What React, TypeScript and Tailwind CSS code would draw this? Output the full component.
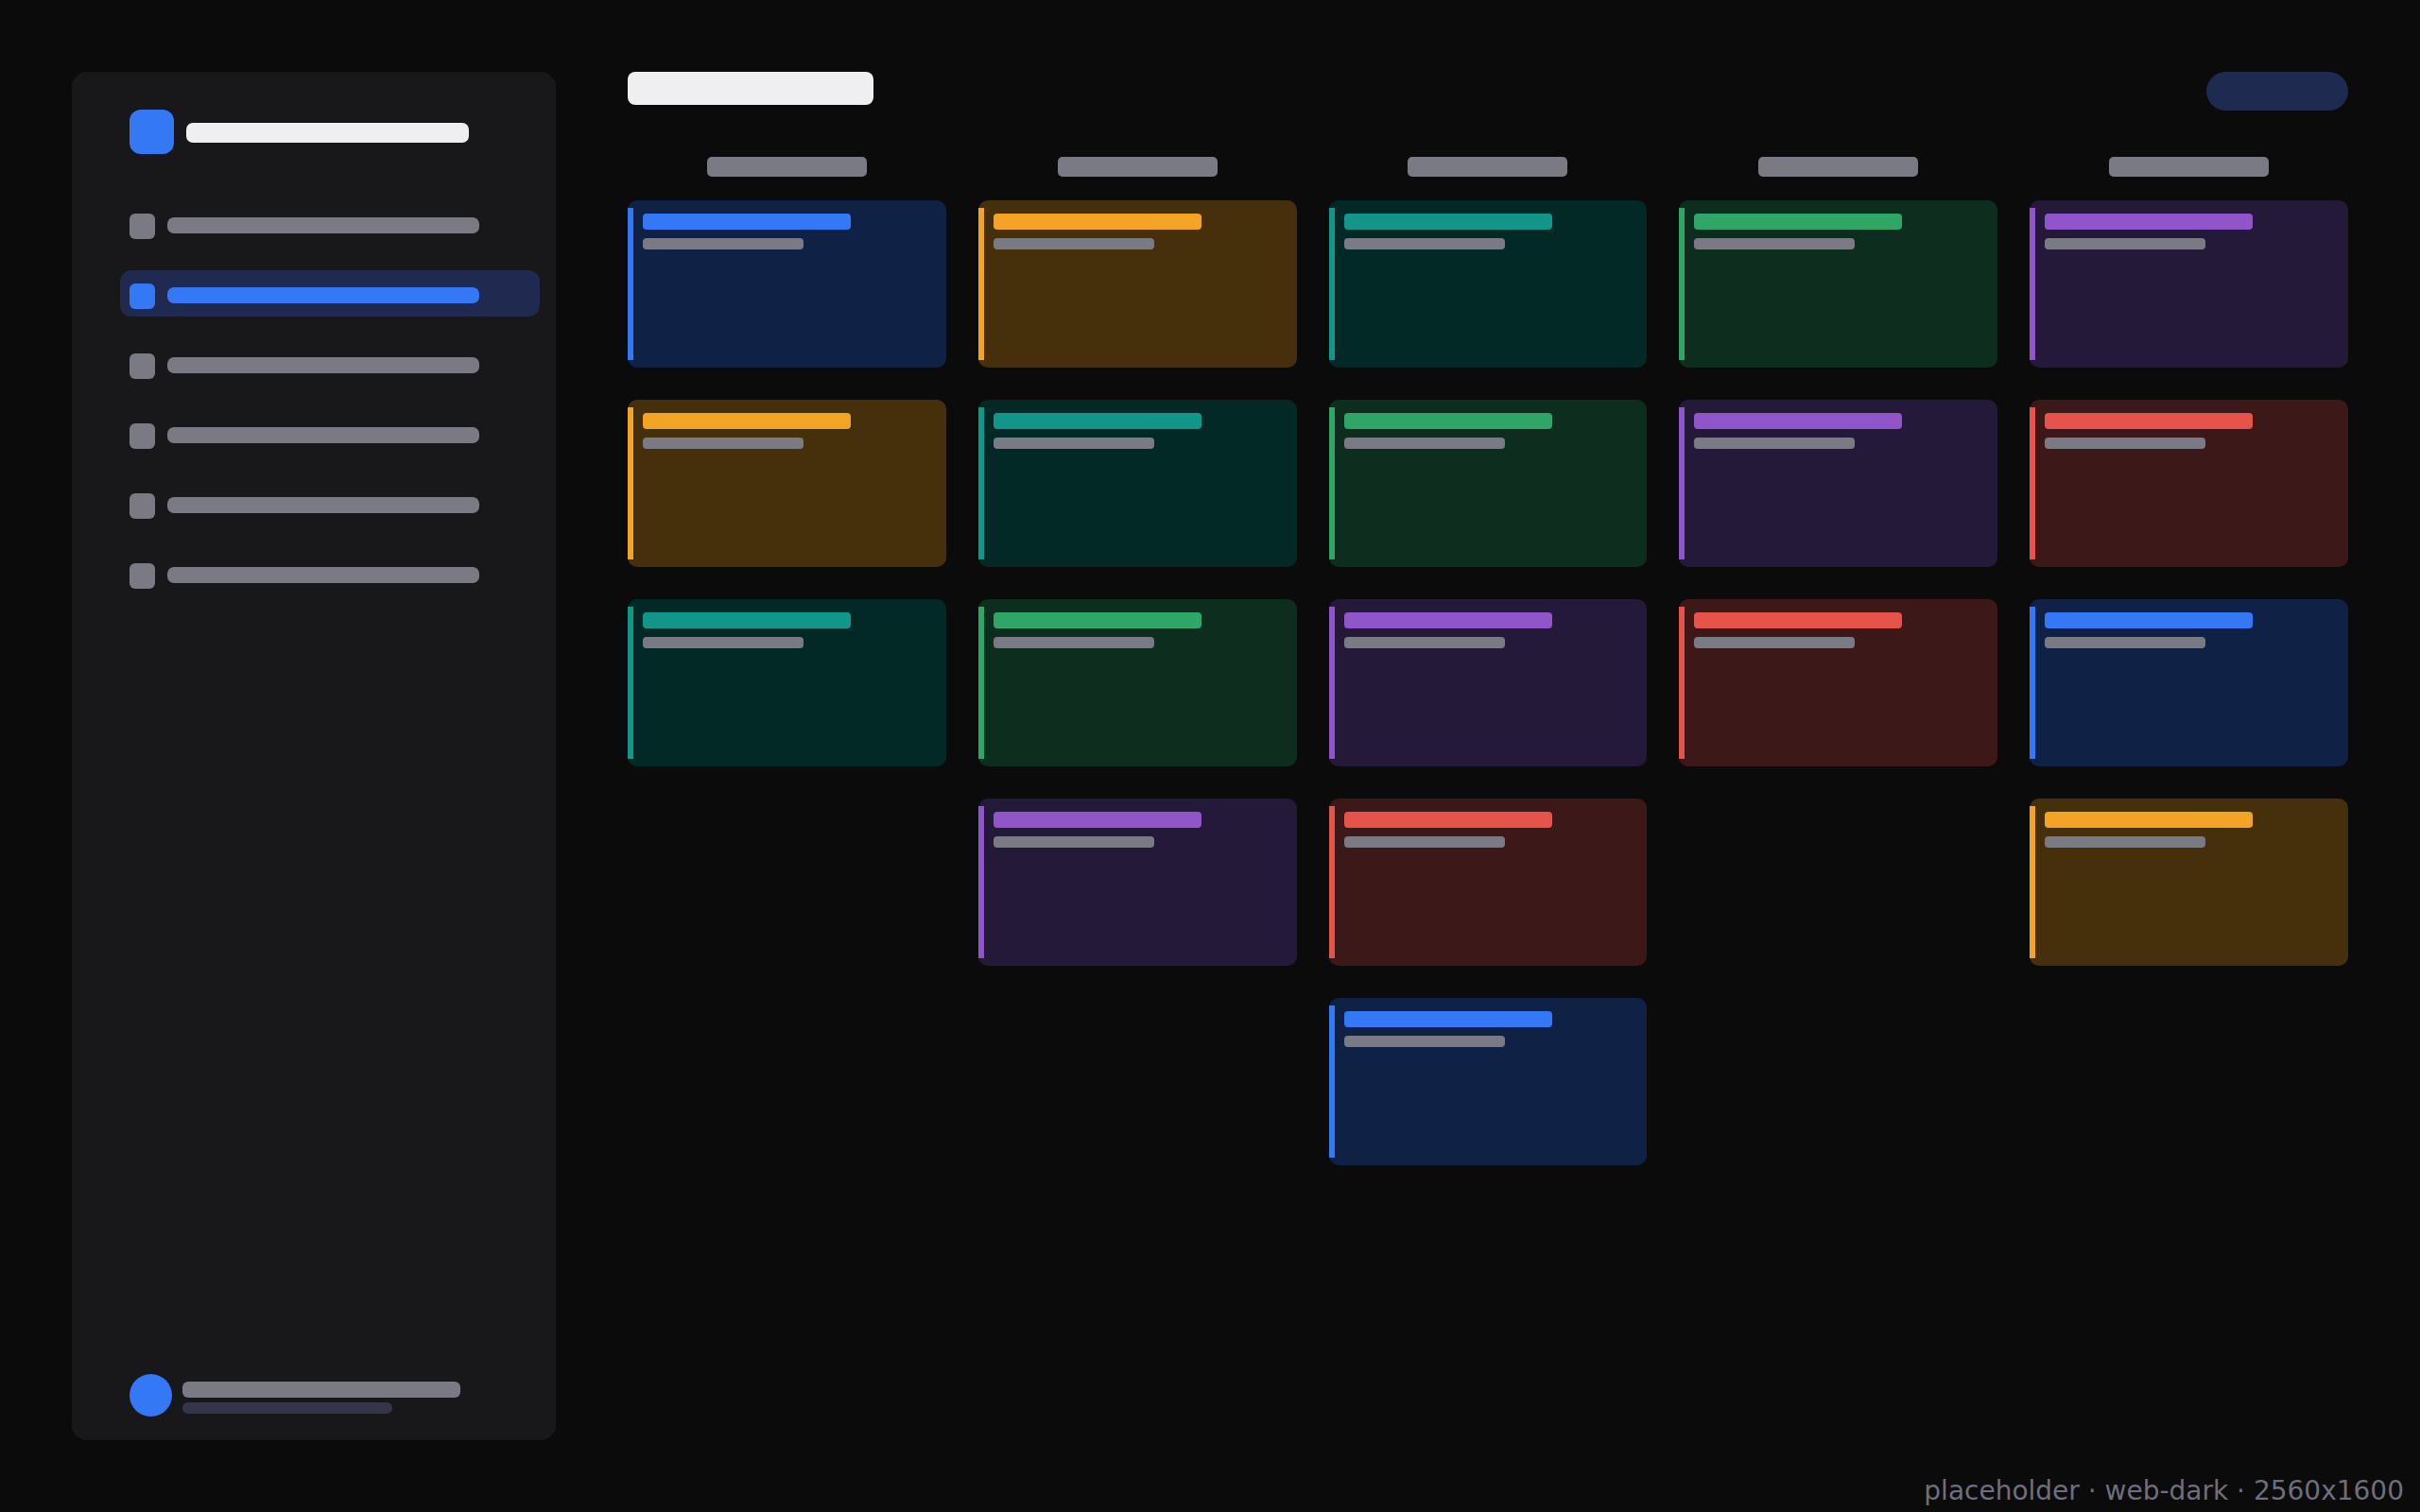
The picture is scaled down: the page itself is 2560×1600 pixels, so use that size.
import React from "react";

type Tone = { bg: string; accent: string };

const BLUE: Tone = { bg: "bg-[#0f2246]", accent: "bg-[#3478f6]" };
const ORANGE: Tone = { bg: "bg-[#45300b]", accent: "bg-[#f4a424]" };
const TEAL: Tone = { bg: "bg-[#032927]", accent: "bg-[#11978a]" };
const GREEN: Tone = { bg: "bg-[#0d2d1f]", accent: "bg-[#2fa566]" };
const PURPLE: Tone = { bg: "bg-[#25193a]", accent: "bg-[#8f55c9]" };
const RED: Tone = { bg: "bg-[#3d1818]", accent: "bg-[#e5534b]" };

const TONES = [BLUE, ORANGE, TEAL, GREEN, PURPLE, RED];
const COUNTS = [3, 4, 5, 3, 4];

function Card({ tone }: { tone: Tone }) {
  return (
    <div className={`flex h-[177px] rounded-[10px] ${tone.bg}`}>
      <div className={`w-[6px] my-[8px] shrink-0 ${tone.accent}`} />
      <div className="flex flex-col pl-[10px] pt-[14px]">
        <div className={`w-[220px] h-[17px] rounded-[4px] ${tone.accent}`} />
        <div className="mt-[9px] w-[170px] h-[12px] rounded-[4px] bg-[#7a7a84]" />
      </div>
    </div>
  );
}

function NavItem({ active }: { active?: boolean }) {
  return (
    <div
      className={`flex items-start h-[49px] pt-[14px] px-[10px] gap-[13px] rounded-[12px] ${
        active ? "bg-[#202a50]" : ""
      }`}
    >
      <div
        className={`w-[27px] h-[27px] rounded-[6px] shrink-0 ${
          active ? "bg-[#3478f6]" : "bg-[#7a7a84]"
        }`}
      />
      <div
        className={`mt-[4px] w-[330px] h-[17px] rounded-[7px] ${
          active ? "bg-[#3478f6]" : "bg-[#7a7a84]"
        }`}
      />
    </div>
  );
}

export default function App() {
  return (
    <div
      className="relative w-[2560px] h-[1600px] bg-[#0b0b0c] flex p-[76px] gap-[76px] overflow-hidden"
      style={{ fontFamily: '"DejaVu Sans", sans-serif' }}
    >
      <aside className="w-[512px] h-full shrink-0 bg-[#18181b] rounded-[16px] flex flex-col pt-[40px] pb-[25px]">
        <div className="flex items-center pl-[61px] gap-[13px]">
          <div className="w-[47px] h-[47px] rounded-[12px] bg-[#3478f6]" />
          <div className="mt-[2px] w-[299px] h-[21px] rounded-[7px] bg-[#efeff1]" />
        </div>
        <nav className="mt-[49px] flex flex-col gap-[25px] pl-[51px] pr-[17px]">
          <NavItem />
          <NavItem active />
          <NavItem />
          <NavItem />
          <NavItem />
          <NavItem />
        </nav>
        <div className="flex-1" />
        <div className="flex items-center pl-[61px] gap-[11px]">
          <div className="w-[45px] h-[45px] rounded-full bg-[#3478f6]" />
          <div className="flex flex-col mt-[5px]">
            <div className="w-[294px] h-[17px] rounded-[6px] bg-[#7a7a84]" />
            <div className="mt-[5px] w-[222px] h-[12px] rounded-full bg-[#33364b]" />
          </div>
        </div>
      </aside>

      <main className="flex-1 flex flex-col">
        <header className="flex justify-between items-start h-[41px]">
          <div className="w-[260px] h-[35px] rounded-[8px] bg-[#efeff1]" />
          <div className="w-[150px] h-[41px] rounded-full bg-[#1f2a50]" />
        </header>
        <div className="mt-[49px] grid grid-cols-5 gap-x-[34px] items-start">
          {COUNTS.map((count, ci) => (
            <div key={ci} className="flex flex-col">
              <div className="self-center w-[169px] h-[21px] rounded-[5px] bg-[#7a7a84]" />
              <div className="mt-[25px] flex flex-col gap-[34px]">
                {Array.from({ length: count }).map((_, ri) => (
                  <Card key={ri} tone={TONES[(ci + ri) % 6]} />
                ))}
              </div>
            </div>
          ))}
        </div>
      </main>

      <div className="absolute right-[17px] bottom-[4px] text-[28px] leading-[36px] text-[#6e6e7e]">
        placeholder · web-dark · 2560x1600
      </div>
    </div>
  );
}
